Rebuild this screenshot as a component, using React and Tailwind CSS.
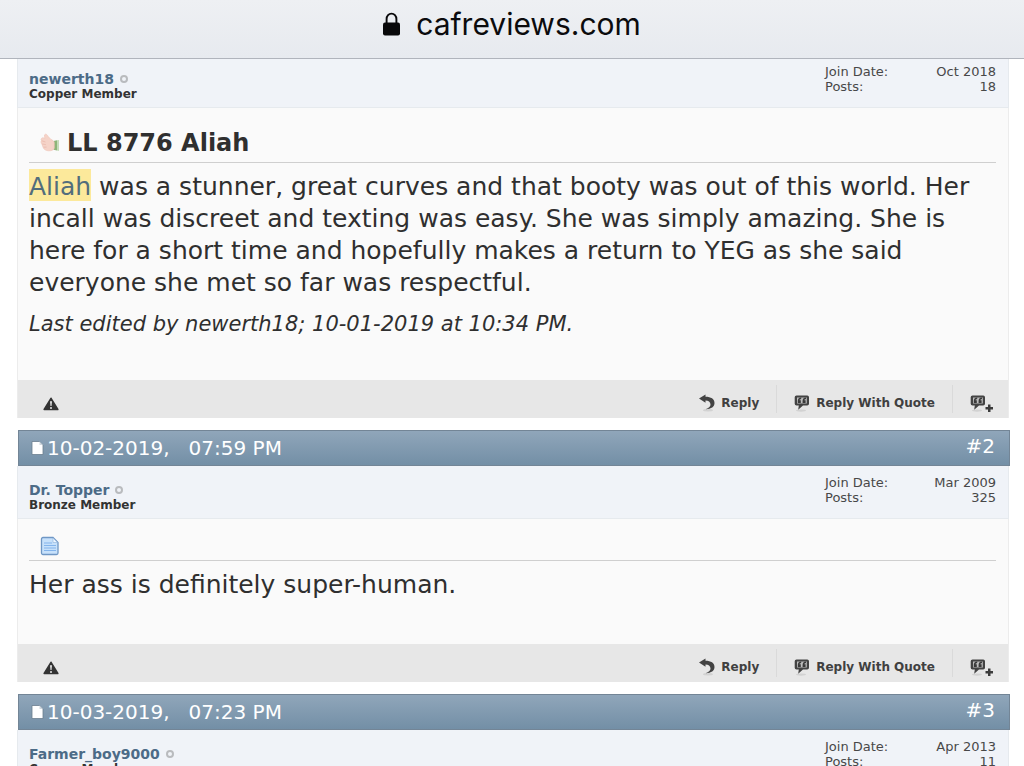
import React from 'react';

const posts = [
  {
    id: 1,
    user: 'newerth18',
    rank: 'Copper Member',
    joined: 'Oct 2018',
    count: '18',
    title: 'LL 8776 Aliah',
    highlight: 'Aliah',
    text: ' was a stunner, great curves and that booty was out of this world. Her incall was discreet and texting was easy. She was simply amazing. She is here for a short time and hopefully makes a return to YEG as she said everyone she met so far was respectful.',
    edited: 'Last edited by newerth18; 10-01-2019 at 10:34 PM.',
  },
  {
    id: 2,
    date: '10-02-2019,',
    time: '07:59 PM',
    user: 'Dr. Topper',
    rank: 'Bronze Member',
    joined: 'Mar 2009',
    count: '325',
    text: 'Her ass is definitely super-human.',
  },
  {
    id: 3,
    date: '10-03-2019,',
    time: '07:23 PM',
    user: 'Farmer_boy9000',
    rank: 'Copper Member',
    joined: 'Apr 2013',
    count: '11',
  },
];

function LockIcon() {
  return (
    <svg width="17" height="24" viewBox="0 0 17 24" aria-hidden="true">
      <path d="M3.6 12V7a4.9 5.4 0 0 1 9.8 0v5" fill="none" stroke="#08080a" strokeWidth="1.9" />
      <rect x="0" y="10.5" width="17" height="13" rx="2" fill="#08080a" />
    </svg>
  );
}

function ThumbIcon() {
  return (
    <svg width="20" height="20" viewBox="0 0 20 20" aria-hidden="true">
      <path d="M13.500 8 17 7.300v10.200l-3.500-.8z" fill="#8db578" />
      <path d="M17 7.300 19 7v11l-2-.5z" fill="#c5dcb9" />
      <path d="M5.300 1.200c1.400-.2 2.100 1 2.900 2.300L11 6.500c1.600.6 3 1.500 3.300 3v5.700c-1 1.900-3 2.700-5.500 2.600-2.800-.1-4.800-1.300-5.500-3L2 11.500C.9 10 .8 8.600 1.500 7.600c-.8-1.200-.3-2.300.8-2.700.8-.3 1.700 0 2.600.6L4.500 3.200c-.2-1 .1-1.800.8-2z" fill="#f5d3c8" stroke="#efc3b6" strokeWidth=".6" />
      <path d="M1.800 7.800 5.500 9M2.200 11l3.600.6M3.600 14.200l3-.1" stroke="#e9b9ac" strokeWidth=".8" fill="none" />
    </svg>
  );
}

function PageIcon() {
  return (
    <svg width="20" height="20" viewBox="0 0 20 20" aria-hidden="true">
      <path d="M3 1.500h10l5 5V17a1.500 1.500 0 0 1-1.500 1.500H3A1.500 1.500 0 0 1 1.500 17V3A1.500 1.500 0 0 1 3 1.500z" fill="#c7e1fb" stroke="#6f97c5" strokeWidth="1.300" />
      <path d="M13 2v4.500h4.500z" fill="#edf6ff" stroke="#8fb3dc" strokeWidth=".6" />
      <path d="M4 7h8M4 9.500h12M4 12h12M4 14.500h12" stroke="#83b4ec" strokeWidth="1.100" />
    </svg>
  );
}

function PostIcon() {
  return (
    <svg width="13" height="16" viewBox="0 0 13 16" aria-hidden="true">
      <path d="M1 1.500h7.500L12 5v9.500H1z" fill="#fff" stroke="#6b7d8e" strokeWidth=".8" />
      <path d="M8.500 1.500V5H12z" fill="#cfd8df" />
    </svg>
  );
}

function WarningIcon() {
  return (
    <svg width="16" height="14" viewBox="0 0 16 14" aria-hidden="true">
      <path d="M8 1.300 14.800 12.500H1.200z" fill="#343434" stroke="#343434" strokeWidth="1.600" strokeLinejoin="round" />
      <path d="M7 4.300h2l-.5 4.700h-1z" fill="#e7e7e7" />
      <circle cx="8" cy="11" r="1" fill="#e7e7e7" />
    </svg>
  );
}

function ReplyIcon() {
  return (
    <svg width="16" height="18" viewBox="0 0 16 18" aria-hidden="true">
      <ellipse cx="9" cy="16.200" rx="5" ry="1.200" fill="#d2d2d2" />
      <path d="M0 4.500 6.500.500v2.300C12 2.800 15.500 5 15.500 9c0 3.600-3 6-9 6.300 3.600-1.400 5.200-3.200 5-5.100C11.300 7.800 9.500 6.700 6.500 6.500V8.700z" fill="#434343" />
    </svg>
  );
}

function QuoteBubble() {
  return (
    <>
      <ellipse cx="7" cy="15.600" rx="5" ry="1.100" fill="#d2d2d2" />
      <path d="M2.500.5h10.700A1.800 1.800 0 0 1 15 2.300v6.400a1.800 1.800 0 0 1-1.800 1.800H9L4.200 14.800l.6-4.300H2.500A1.800 1.800 0 0 1 .7 8.700V2.300A1.800 1.800 0 0 1 2.500.5z" fill="#434343" />
      <path d="M3 2.500h9.800v6H3z" fill="#bdbdbd" />
      <path d="M7.200 2.500C4.700 2.700 3.800 4 3.800 6v2h3V5.200H5.500c.1-.7.700-1.200 1.700-1.300zM12 2.500C9.500 2.700 8.600 4 8.600 6v2h3V5.200h-1.300c.1-.7.700-1.200 1.700-1.300z" fill="#3a3a3a" />
    </>
  );
}

function QuoteIcon() {
  return (
    <svg width="16" height="17" viewBox="0 0 16 17" aria-hidden="true">
      <QuoteBubble />
    </svg>
  );
}

function MultiQuoteIcon() {
  return (
    <svg width="24" height="17" viewBox="0 0 24 17" aria-hidden="true">
      <QuoteBubble />
      <path d="M18 9.500h2.500v2.500H23v2.500h-2.500V17H18v-2.500h-2.500V12H18z" fill="#3c3c3c" />
    </svg>
  );
}

function PostHeader({ post }) {
  return (
    <div className="-mr-px ml-px flex h-9 items-center justify-between border border-[#738596] bg-linear-to-b from-[#90a6ba] to-[#738fa6] pr-3.5 pl-3 text-xl text-white">
      <div className="flex items-center">
        <PostIcon />
        <span className="ml-[3px]">{post.date}</span>
        <span className="ml-[19px]">{post.time}</span>
      </div>
      <a href={`#post${post.id}`} className="pb-1">#{post.id}</a>
    </div>
  );
}

function UserInfo({ post }) {
  return (
    <div className="flex h-[53px] justify-between border-x border-b border-[#e6eaee] bg-[#f0f3f8] pr-3 pl-[11px]">
      <div className="pt-4 text-xs leading-[15px] font-bold text-[#333]">
        <div className="flex items-center gap-1.5">
          <a href="#profile" className="text-sm leading-4 text-[#4c6b87]">{post.user}</a>
          <span className="size-2 rounded-full border-2 border-[#b9bbbe]" />
        </div>
        <div>{post.rank}</div>
      </div>
      <dl className="grid w-[171px] grid-cols-2 content-start pt-[9px] text-[13px] leading-[15px] text-[#484848]">
        <dt>Join Date:</dt>
        <dd className="text-right">{post.joined}</dd>
        <dt>Posts:</dt>
        <dd className="text-right">{post.count}</dd>
      </dl>
    </div>
  );
}

function PostBody({ post }) {
  return (
    <div className="border-x border-[#ececec] bg-[#fafafa] pt-4 pr-3 pb-[43px] pl-[11px] text-[#2f2f2f]">
      {post.title ? (
        <div className="flex items-center border-b border-[#cfcfcf] pl-[11px]">
          <ThumbIcon />
          <h2 className="ml-[7px] text-2xl leading-[38px] font-bold">{post.title}</h2>
        </div>
      ) : (
        <div className="border-b border-[#cfcfcf] pb-1 pl-[11px]">
          <div className="pt-px"><PageIcon /></div>
        </div>
      )}
      <p className="mt-2 text-[25px] leading-8">
        {post.highlight && <mark className="bg-[#fce99b] pt-[3px] text-[#526d7c]">{post.highlight}</mark>}
        {post.text}
      </p>
      {post.edited && <p className="mt-3 text-[21px] leading-[26px] italic">{post.edited}</p>}
    </div>
  );
}

function PostFooter() {
  return (
    <div className="flex h-[38px] items-center justify-between border-x border-[#ececec] bg-[#e7e7e7] pr-3.5 pl-[25px] text-xs font-bold text-[#404040]">
      <button aria-label="Report post" className="pt-2.5"><WarningIcon /></button>
      <div className="flex h-7 items-center">
        <button className="flex h-full items-center gap-1.5 pt-2 pr-[17px]">
          <ReplyIcon />
          Reply
        </button>
        <button className="flex h-full items-center gap-1.5 border-l border-[#dadada] px-[17px] pt-2">
          <QuoteIcon />
          Reply With Quote
        </button>
        <button aria-label="Multi-quote" className="flex h-full items-center border-l border-[#dadada] pt-2 pl-[17px]">
          <MultiQuoteIcon />
        </button>
      </div>
    </div>
  );
}

export default function App() {
  return (
    <div className="flex h-screen flex-col overflow-hidden bg-white font-['DejaVu_Sans',sans-serif]">
      <header className="flex h-[59px] shrink-0 items-start justify-center gap-4 border-b border-[#b0b4bc] bg-linear-to-b from-[#eef0f3] to-[#e7eaef] pt-1 font-[Inter,sans-serif] text-[30px] leading-10 text-[#0b0b0d]">
        <div className="pt-2"><LockIcon /></div>
        <span>cafreviews.com</span>
      </header>

      <main className="min-h-0 flex-1 overflow-hidden">
        <div className="-mt-1 mr-[15px] ml-[17px] space-y-3">
          {posts.map((post) => (
            <article key={post.id}>
              {post.date && <PostHeader post={post} />}
              <UserInfo post={post} />
              {post.text && <PostBody post={post} />}
              {post.text && <PostFooter />}
            </article>
          ))}
        </div>
      </main>
    </div>
  );
}
